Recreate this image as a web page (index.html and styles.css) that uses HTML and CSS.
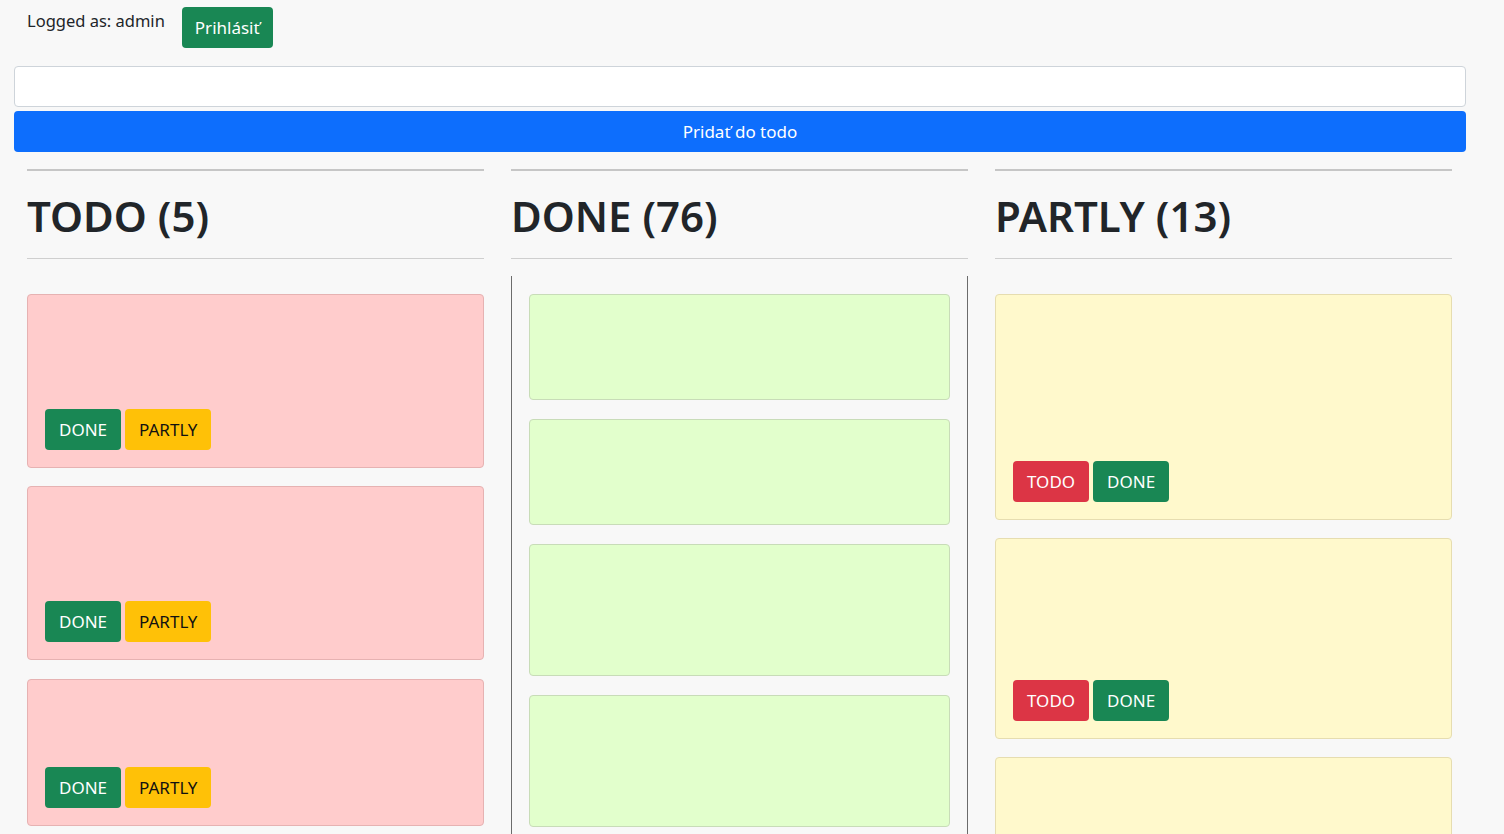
FILE: index.html
```html
<!DOCTYPE html>
<html>
<head>
<meta charset="utf-8">
<link rel="stylesheet" href="styles.css">
</head>
<body>
<div class="topbar">
  <span class="logged">Logged as: admin</span>
  <button class="btn btn-green login">Prihlásiť</button>
</div>
<div class="form">
  <input class="input" type="text">
  <button class="btn btn-blue add">Pridať do todo</button>
</div>
<div class="board">
  <section class="col">
    <hr class="hr-top">
    <h1>TODO (5)</h1>
    <hr class="hr-bottom">
    <div class="list">
      <div class="card pink"><div class="body h97"></div><div class="actions"><button class="btn btn-green">DONE</button><button class="btn btn-yellow">PARTLY</button></div></div>
      <div class="card pink"><div class="body h97"></div><div class="actions"><button class="btn btn-green">DONE</button><button class="btn btn-yellow">PARTLY</button></div></div>
      <div class="card pink last"><div class="body h70"></div><div class="actions"><button class="btn btn-green">DONE</button><button class="btn btn-yellow">PARTLY</button></div></div>
    </div>
  </section>
  <section class="col">
    <hr class="hr-top">
    <h1>DONE (76)</h1>
    <hr class="hr-bottom">
    <div class="list bordered">
      <div class="card green"><div class="body h70"></div></div>
      <div class="card green"><div class="body h70"></div></div>
      <div class="card green"><div class="body h96"></div></div>
      <div class="card green"><div class="body h96"></div></div>
    </div>
  </section>
  <section class="col">
    <hr class="hr-top">
    <h1>PARTLY (13)</h1>
    <hr class="hr-bottom">
    <div class="list">
      <div class="card yellow"><div class="body h149"></div><div class="actions"><button class="btn btn-red">TODO</button><button class="btn btn-green">DONE</button></div></div>
      <div class="card yellow"><div class="body h124"></div><div class="actions"><button class="btn btn-red">TODO</button><button class="btn btn-green">DONE</button></div></div>
      <div class="card yellow"><div class="body h149"></div></div>
    </div>
  </section>
</div>
</body>
</html>
```
FILE: styles.css
```css
html, body {
  margin: 0;
  padding: 0;
  background: #f8f8f8;
  font-family: "Noto Sans", "Open Sans", sans-serif;
  color: #212529;
  overflow: hidden;
  height: 834px;
}
.topbar {
  display: flex;
  align-items: flex-start;
  padding: 7px 0 0 27px;
  height: 48px;
  box-sizing: border-box;
}
.logged {
  font-size: 16.5px;
  line-height: 24px;
  margin-top: 2px;
  margin-right: 17px;
}
.btn {
  font-family: inherit;
  font-size: 17px;
  line-height: 24px;
  height: 41px;
  padding: 0 14px;
  border: none;
  border-radius: 4px;
  cursor: pointer;
}
.btn-green { background: #198754; color: #fff; }
.btn-yellow { background: #ffc107; color: #111; }
.btn-red { background: #dc3545; color: #fff; }
.btn-blue { background: #0d6efd; color: #fff; }
.login { padding: 0 13px; font-size: 17px; }
.form {
  display: flex;
  flex-direction: column;
  gap: 4px;
  padding: 18px 38px 0 14px;
}
.input {
  height: 41px;
  box-sizing: border-box;
  border: 1px solid #ced4da;
  border-radius: 4px;
  background: #fff;
  margin: 0;
}
.add { width: 100%; }
.board {
  display: grid;
  grid-template-columns: repeat(3, 1fr);
  padding: 17px 38px 0 14px;
}
.col {
  padding: 0 14px 0 13px;
}
.hr-top {
  margin: 0;
  border: none;
  border-top: 2px solid #c6c6c6;
}
h1 {
  margin: 0;
  padding: 16px 0 0;
  height: 71px;
  font-size: 42px;
  font-weight: 600;
  line-height: 58px;
}
.hr-bottom {
  margin: 0;
  border: none;
  border-top: 1px solid #cfcfcf;
}
.list {
  margin-top: 17px;
  padding-top: 18px;
  display: flex;
  flex-direction: column;
  gap: 18px;
}
.list.bordered {
  border-left: 1px solid #6c6c6c;
  border-right: 1px solid #6c6c6c;
  padding: 18px 17px 0;
  gap: 19px;
  min-height: 600px;
}
.card {
  border-radius: 4px;
  padding: 17px;
  border: 1px solid;
}
.card.last { margin-top: 1px; }
.pink { background: #ffcccc; border-color: #e6b2b2; }
.green { background: #e2ffcc; border-color: #c8dcb8; }
.yellow { background: #fff9cc; border-color: #e6ddb0; }
.body.h70 { height: 70px; }
.body.h96 { height: 96px; }
.body.h97 { height: 97px; }
.body.h124 { height: 124px; }
.body.h149 { height: 149px; }
.actions {
  display: flex;
  gap: 4px;
}
```
